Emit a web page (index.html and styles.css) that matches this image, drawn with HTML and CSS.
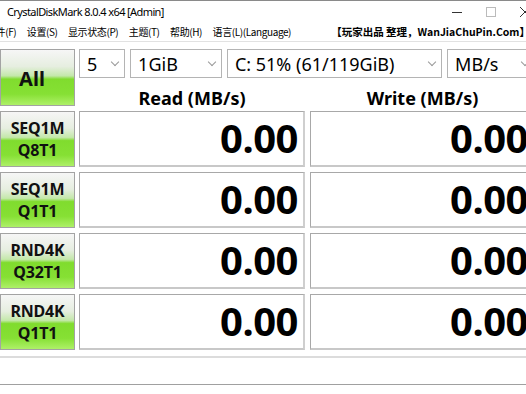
FILE: index.html
```html
<!DOCTYPE html>
<html>
<head>
<meta charset="utf-8">
<link rel="stylesheet" href="styles.css">
</head>
<body>
<div class="window">
  <div class="titlebar">
    <span class="title">CrystalDiskMark 8.0.4 x64 [Admin]</span>
    <div class="winctl">
      <span class="ctl"><svg width="12" height="12" viewBox="0 0 12 12"><line x1="1" y1="6.5" x2="11" y2="6.5" stroke="#333" stroke-width="1"/></svg></span>
      <span class="ctl"><svg width="12" height="12" viewBox="0 0 12 12"><rect x="1.5" y="1.5" width="9" height="9" fill="none" stroke="#bbb" stroke-width="1"/></svg></span>
      <span class="ctl"><svg width="12" height="12" viewBox="0 0 12 12"><path d="M1 1 L11 11 M11 1 L1 11" stroke="#333" stroke-width="1"/></svg></span>
    </div>
  </div>
  <div class="menubar">
    <div class="menus">
      <span class="menu">文件(F)</span>
      <span class="menu">设置(S)</span>
      <span class="menu">显示状态(P)</span>
      <span class="menu">主题(T)</span>
      <span class="menu">帮助(H)</span>
      <span class="menu">语言(L)(Language)</span>
    </div>
    <span class="brand">【玩家出品 整理，WanJiaChuPin.Com】</span>
  </div>
  <div class="main">
    <div class="btn all">All</div>
    <div class="combos">
      <div class="combo c-count"><span>5</span><i class="chev"></i></div>
      <div class="combo c-size"><span>1GiB</span><i class="chev"></i></div>
      <div class="combo c-drive"><span>C: 51% (61/119GiB)</span><i class="chev"></i></div>
      <div class="combo c-unit"><span>MB/s</span><i class="chev"></i></div>
    </div>
    <div class="head">Read (MB/s)</div>
    <div class="head w">Write (MB/s)</div>

    <div class="btn test"><span>SEQ1M</span><span>Q8T1</span></div>
    <div class="val">0.00</div>
    <div class="val w">0.00</div>

    <div class="btn test"><span>SEQ1M</span><span>Q1T1</span></div>
    <div class="val">0.00</div>
    <div class="val w">0.00</div>

    <div class="btn test"><span>RND4K</span><span>Q32T1</span></div>
    <div class="val">0.00</div>
    <div class="val w">0.00</div>

    <div class="btn test"><span>RND4K</span><span>Q1T1</span></div>
    <div class="val">0.00</div>
    <div class="val w">0.00</div>
  </div>
  <div class="comment"></div>
  <div class="statusline"></div>
</div>
</body>
</html>
```
FILE: styles.css
```css
html, body {
  margin: 0;
  padding: 0;
  background: #ffffff;
  overflow: hidden;
}
body {
  width: 526px;
  height: 394px;
  font-family: "Noto Sans", "Noto Sans CJK SC", sans-serif;
  color: #000;
}
.window {
  width: 560px;
  height: 394px;
  border-top: 1px solid #8a8a8a;
  box-sizing: border-box;
  background: #fff;
}
.titlebar {
  height: 21px;
  display: flex;
  align-items: center;
  position: relative;
}
.title {
  font-size: 11px;
  margin-left: 7px;
  letter-spacing: -0.6px;
}
.winctl {
  position: absolute;
  top: 0;
  left: 440px;
  display: flex;
  height: 21px;
  align-items: center;
}
.ctl {
  width: 34px;
  display: flex;
  justify-content: center;
}
.menubar {
  height: 19px;
  display: flex;
  align-items: center;
  justify-content: space-between;
  width: 526px;
  border-bottom: 1px solid #e2e2e2;
  font-size: 10px;
  font-family: "Noto Sans CJK SC", sans-serif;
}
.menus {
  display: flex;
  margin-left: -14px;
}
.menu {
  margin-right: 10.5px;
  white-space: nowrap;
  letter-spacing: -0.4px;
}
.brand {
  font-weight: bold;
  white-space: nowrap;
  margin-right: -4px;
  font-size: 10.5px;
  letter-spacing: 0px;
}
.main {
  display: grid;
  grid-template-columns: 75px 226px 226px;
  grid-template-rows: 29px 23px 56px 56px 56px 56px;
  column-gap: 4px;
  row-gap: 5px;
  margin-top: 7px;
}
.w {
  margin-left: 1px;
}
.btn {
  box-sizing: border-box;
  border: 1px solid #a3a3a3;
  background: linear-gradient(#f6f6f6 0%, #e6eee0 30%, #c4e8aa 47%, #80dc2e 53%, #86e034 80%, #aef068 100%);
  display: flex;
  flex-direction: column;
  align-items: center;
  justify-content: center;
  font-weight: bold;
  color: #111;
}
.all {
  grid-row: 1 / span 2;
  grid-column: 1;
  font-size: 20px;
  height: 57px;
  padding: 2px 11px 0 0;
}
.test {
  font-size: 16px;
  line-height: 22px;
  letter-spacing: -0.2px;
}
.combos {
  grid-column: 2 / span 2;
  display: flex;
  gap: 5px;
}
.combo {
  box-sizing: border-box;
  height: 29px;
  border: 1px solid #b4b4b4;
  background: #fff;
  display: flex;
  align-items: center;
  justify-content: space-between;
  padding: 0 6px 0 7px;
  font-size: 18px;
}
.c-count { width: 47px; }
.c-size { width: 94px; }
.c-drive { width: 221px; }
.c-unit { width: 90px; }
.chev {
  width: 5px;
  height: 5px;
  border-right: 1px solid #999;
  border-bottom: 1px solid #999;
  transform: rotate(45deg);
  margin-top: -4px;
}
.head {
  font-weight: bold;
  font-size: 18px;
  text-align: center;
  line-height: 30px;
  height: 23px;
}
.val {
  box-sizing: border-box;
  border: 1px solid #a8a8a8;
  border-bottom: 2px solid #c8c8c8;
  border-right: 2px solid #cfcfcf;
  background: #fff;
  font-weight: bold;
  font-size: 40px;
  text-align: right;
  padding-right: 5px;
  line-height: 52px;
  letter-spacing: -0.5px;
}
.comment {
  margin-top: 6px;
  height: 26px;
  border-top: 2px solid #dcdcdc;
  border-bottom: 1px solid #a0a0a0;
  width: 526px;
}
.statusline {
  height: 9px;
  border-bottom: 1px solid #a0a0a0;
  width: 526px;
}
```
